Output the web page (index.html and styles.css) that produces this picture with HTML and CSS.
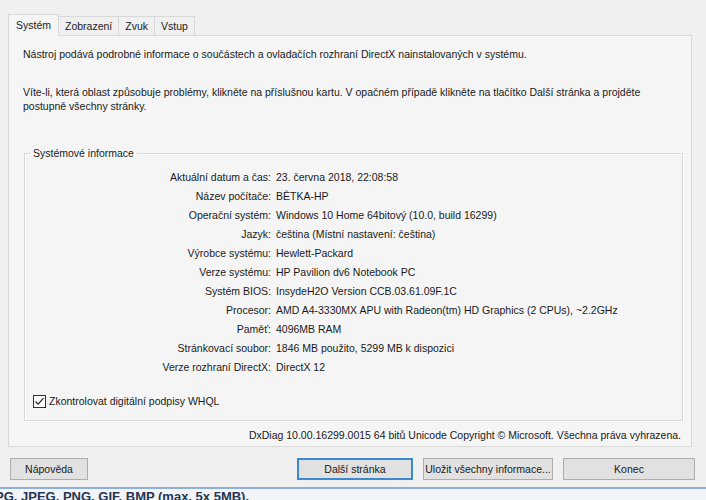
FILE: index.html
```html
<!DOCTYPE html>
<html lang="cs">
<head>
    <meta charset="UTF-8">
    <title>Diagnostický nástroj DirectX</title>
    <link rel="stylesheet" href="styles.css">
</head>
<body>
    <div class="dialog">
        <!-- Tabs -->
        <div class="tabs">
            <div class="tab active">Systém</div>
            <div class="tab">Zobrazení</div>
            <div class="tab">Zvuk</div>
            <div class="tab">Vstup</div>
        </div>

        <div class="panel">
            <p class="intro">Nástroj podává podrobné informace o součástech a ovladačích rozhraní DirectX nainstalovaných v systému.</p>
            <p class="intro second">Víte-li, která oblast způsobuje problémy, klikněte na příslušnou kartu. V opačném případě klikněte na tlačítko Další stránka a projděte postupně všechny stránky.</p>

            <fieldset class="group">
                <legend>Systémové informace</legend>
                <div class="info">
                    <span class="label">Aktuální datum a čas:</span><span>23. června 2018, 22:08:58</span>
                    <span class="label">Název počítače:</span><span>BĚTKA-HP</span>
                    <span class="label">Operační systém:</span><span>Windows 10 Home 64bitový (10.0, build 16299)</span>
                    <span class="label">Jazyk:</span><span>čeština (Místní nastavení: čeština)</span>
                    <span class="label">Výrobce systému:</span><span>Hewlett-Packard</span>
                    <span class="label">Verze systému:</span><span>HP Pavilion dv6 Notebook PC</span>
                    <span class="label">Systém BIOS:</span><span>InsydeH2O Version CCB.03.61.09F.1C</span>
                    <span class="label">Procesor:</span><span>AMD A4-3330MX APU with Radeon(tm) HD Graphics (2 CPUs), ~2.2GHz</span>
                    <span class="label">Paměť:</span><span>4096MB RAM</span>
                    <span class="label">Stránkovací soubor:</span><span>1846 MB použito, 5299 MB k dispozici</span>
                    <span class="label">Verze rozhraní DirectX:</span><span>DirectX 12</span>
                </div>
                <label class="check">
                    <span class="box">
                        <svg width="11" height="11" viewBox="0 0 11 11"><path d="M1.5 5.5 L4.2 8.2 L9.5 2.2" fill="none" stroke="#222" stroke-width="1.2"/></svg>
                    </span>
                    Zkontrolovat digitální podpisy WHQL
                </label>
            </fieldset>

            <div class="copyright">DxDiag 10.00.16299.0015 64 bitů Unicode Copyright © Microsoft. Všechna práva vyhrazena.</div>
        </div>

        <!-- Buttons -->
        <div class="buttons">
            <button class="btn help">Nápověda</button>
            <div class="spacer"></div>
            <button class="btn next">Další stránka</button>
            <button class="btn save">Uložit všechny informace...</button>
            <button class="btn close">Konec</button>
        </div>
    </div>

    <div class="page-strip">
        <span>PG, JPEG, PNG, GIF, BMP (max. 5x 5MB).</span>
    </div>
</body>
</html>
```

FILE: styles.css
```css
body {
    margin: 0;
    background-color: #f0f0f0;
    font-family: "Liberation Sans", Arial, sans-serif;
    font-size: 10.5px;
    color: #1a1a1a;
    height: 500px;
    overflow: hidden;
}
.dialog {
    padding: 14px 14px 0 8px;
    height: 473px;
    border-bottom: 2px solid #8fb0d8;
}
.tabs {
    display: flex;
    align-items: flex-end;
    height: 21px;
}
.tab {
    height: 19px;
    line-height: 18px;
    padding: 0 6px;
    border: 1px solid #d9d9d9;
    border-bottom: none;
    margin-left: -1px;
    background-color: #f0f0f0;
    box-sizing: border-box;
}
.tab.active {
    height: 22px;
    line-height: 20px;
    margin-left: 0;
    margin-bottom: -1px;
    background-color: #f5f5f5;
    position: relative;
    z-index: 1;
    padding: 0 7px;
}
.panel {
    border: 1px solid #d9d9d9;
    background-color: #f5f5f5;
    height: 412px;
    box-sizing: border-box;
    padding: 11px 8px 0 14px;
}
.intro {
    margin: 0;
    line-height: 14px;
}
.intro.second {
    width: 650px;
    margin-top: 24px;
}
.group {
    margin: 34px 0 0 1px;
    padding: 0;
    border: 1px solid #d8d8d8;
    box-shadow: inset 1px 1px #ffffff, 1px 1px #ffffff;
    height: 274px;
    box-sizing: border-box;
}
.group legend {
    margin-left: 5px;
    padding: 0 3px;
    line-height: 12px;
}
.info {
    display: grid;
    grid-template-columns: 246px auto;
    column-gap: 5px;
    grid-auto-rows: 19px;
    line-height: 19px;
    margin-top: 9px;
}
.info .label {
    text-align: right;
}
.check {
    display: flex;
    align-items: center;
    margin: 17px 0 0 8px;
    height: 14px;
}
.check .box {
    width: 11px;
    height: 11px;
    border: 1px solid #333;
    background-color: #fff;
    margin-right: 3px;
    display: flex;
}
.copyright {
    text-align: right;
    margin-top: 7px;
    padding-right: 2px;
    line-height: 14px;
}
.buttons {
    display: flex;
    margin-top: 11px;
    gap: 10px;
    padding-left: 2px;
}
.spacer {
    flex: 1;
}
.btn {
    height: 22px;
    font-family: inherit;
    font-size: 10.5px;
    color: #1a1a1a;
    background-color: #e1e1e1;
    border: 1px solid #adadad;
    padding: 0;
    white-space: nowrap;
}
.help { width: 78px; }
.next {
    width: 116px;
    border: 2px solid #3b8ad0;
}
.save { width: 130px; }
.close { width: 132px; margin-right: -3px; }
.page-strip {
    background-color: #f2f4f7;
    height: 12px;
    position: relative;
}
.page-strip span {
    position: absolute;
    left: -5px;
    top: 0;
    font-size: 13px;
    font-weight: bold;
    color: #253654;
    white-space: nowrap;
}
```
